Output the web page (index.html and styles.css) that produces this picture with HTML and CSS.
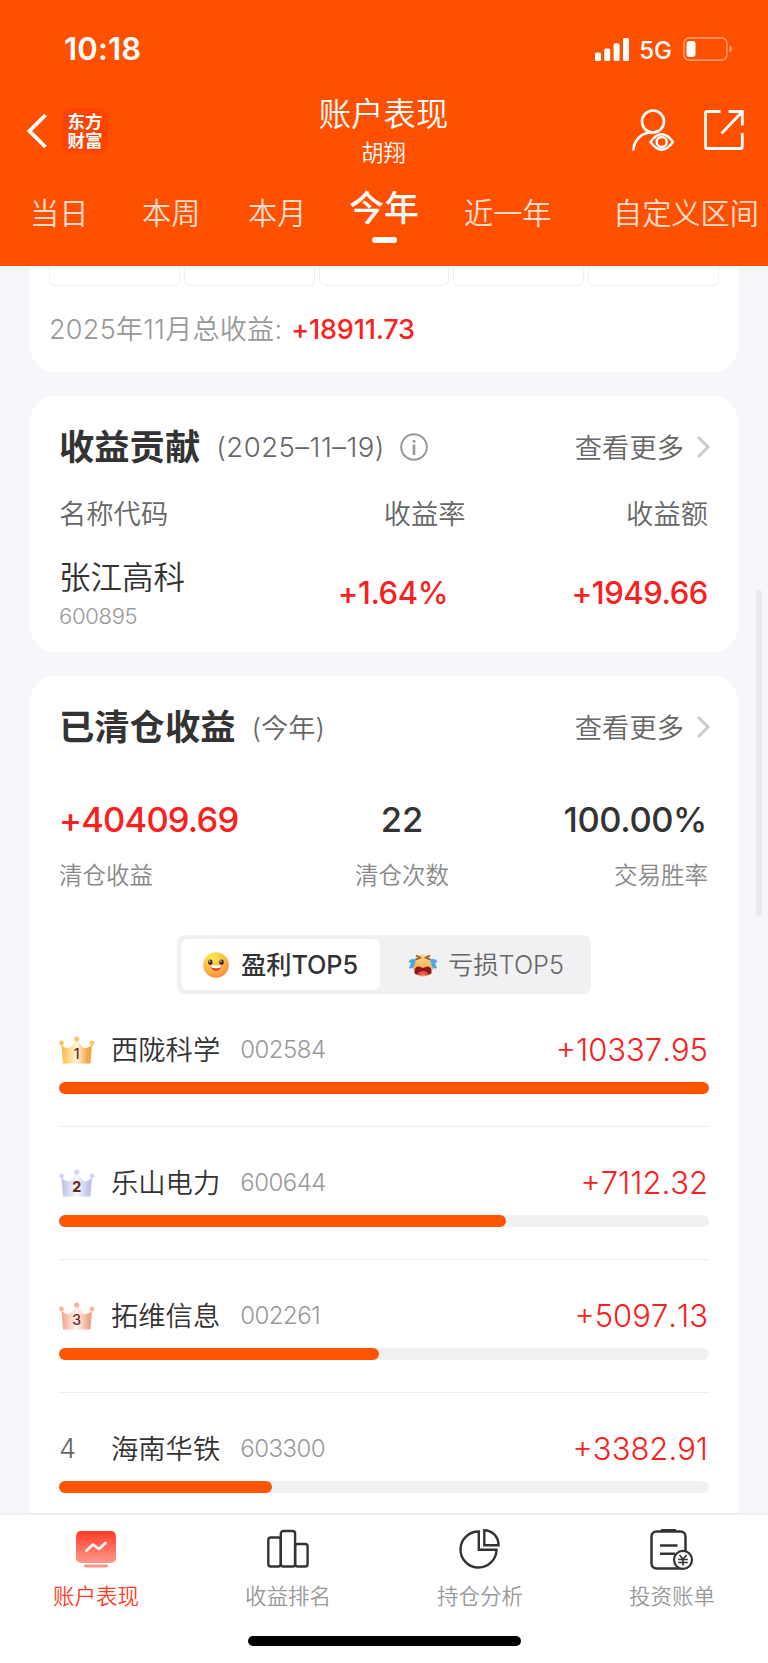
FILE: index.html
```
<!DOCTYPE html>
<html lang="zh-CN">
<head>
<meta charset="UTF-8">
<title>账户表现</title>
<link rel="stylesheet" href="styles.css">
</head>
<body>
<div id="app">

<header>
<div class="status">
<span class="clock">10:18</span>
<svg class="signal" width="34" height="23" viewBox="0 0 34 23" fill="#fff"><rect x="0" y="14.5" width="6" height="8.5" rx="1.6"/><rect x="9.2" y="10.5" width="6" height="12.5" rx="1.6"/><rect x="18.6" y="5.3" width="6" height="17.7" rx="1.6"/><rect x="28" y="0" width="6" height="23" rx="1.6"/></svg>
<span class="net">5G</span>
<svg class="battery" width="50" height="24" viewBox="0 0 50 24"><rect x=".9" y=".9" width="43" height="22.2" rx="5.5" fill="none" stroke="#fff" stroke-opacity=".42" stroke-width="1.6"/><rect x="3.5" y="4" width="9" height="16" rx="3" fill="#fff"/><path d="M46.5 8.2q2.6 1.4 2.6 3.8t-2.6 3.8z" fill="#fff" fill-opacity=".45"/></svg>
</div>

<div class="nav">
<div class="left">
<svg width="20" height="36" viewBox="0 0 20 36" fill="none" stroke="#fff" stroke-width="3.8"><path d="M18.5 2 2.5 18 18.5 34"/></svg>
<div class="logo">东方<br>财富</div>
</div>
<div class="title"><h1>账户表现</h1><p>胡翔</p></div>
<div class="right">
<svg width="42" height="42" viewBox="0 0 42 42" fill="none" stroke="#fff" stroke-width="2.6"><circle cx="21" cy="12.5" r="11"/><path d="M1.3 41.5C2 30.5 9.5 23.8 20 23.3"/><path d="M18.5 33Q29.7 17.5 41 33 29.7 48.5 18.5 33z" stroke-width="2.4"/><circle cx="29.7" cy="33" r="5" stroke-width="2.4"/></svg>
<svg width="40" height="40" viewBox="0 0 40 40" fill="none" stroke="#fff" stroke-width="2.8"><path d="M16.5 1.5H3.3Q1.5 1.5 1.5 3.3V36.7Q1.5 38.5 3.3 38.5H36.5Q38.3 38.5 38.3 36.7V23M24.5 1.5H38.3V15.5M38 2 17.5 23.5"/></svg>
</div>
</div>

<div class="tabs">
<span>当日</span><span>本周</span><span>本月</span><span class="on">今年</span><span>近一年</span><span>自定义区间</span>
</div>
</header>

<main>
<section class="card calendar">
<div class="days"><i></i><i></i><i></i><i></i><i></i></div>
<p>2025年11月总收益: <b>+18911.73</b></p>
</section>

<section class="card contrib">
<div class="head">
<h2>收益贡献</h2><span class="sub date">(2025–11–19)</span>
<svg class="info" width="28" height="28" viewBox="0 0 28 28" fill="none" stroke="#999" stroke-width="2"><circle cx="14" cy="14" r="12.8"/><path d="M14 11.5V22" stroke-width="2.6"/><circle cx="14" cy="8.3" r="1.5" fill="#999" stroke="none"/></svg>
<span class="more">查看更多</span>
<svg class="arrow" width="13" height="22" viewBox="0 0 13 22" fill="none" stroke="#ccc" stroke-width="3"><path d="M1 1 11 11 1 21"/></svg>
</div>
<div class="cols"><span>名称代码</span><span>收益率</span><span>收益额</span></div>
<div class="stock">
<div><div class="name">张江高科</div><div class="code">600895</div></div>
<b class="rate">+1.64%</b><b class="amount">+1949.66</b>
</div>
</section>

<section class="card cleared">
<div class="head">
<h2>已清仓收益</h2><span class="sub">(今年)</span>
<span class="more">查看更多</span>
<svg class="arrow" width="13" height="22" viewBox="0 0 13 22" fill="none" stroke="#ccc" stroke-width="3"><path d="M1 1 11 11 1 21"/></svg>
</div>
<div class="stats">
<div><b class="red">+40409.69</b><p>清仓收益</p></div>
<div><b>22</b><p>清仓次数</p></div>
<div><b>100.00%</b><p>交易胜率</p></div>
</div>

<div class="toggle">
<div class="on">
<svg width="26" height="26" viewBox="0 0 26 26"><defs><radialGradient id="smile" cx=".35" cy=".2" r=".9"><stop offset="0" stop-color="#ffe94e"/><stop offset=".55" stop-color="#fdb944"/><stop offset="1" stop-color="#f4803f"/></radialGradient></defs><circle cx="13" cy="13" r="12.8" fill="url(#smile)"/><ellipse cx="7.3" cy="10.2" rx="2.2" ry="2.7" fill="#4b2631"/><ellipse cx="18.5" cy="10.2" rx="2.2" ry="2.7" fill="#4b2631"/><circle cx="6.7" cy="9.3" r=".8" fill="#fff"/><circle cx="17.9" cy="9.3" r=".8" fill="#fff"/><path d="M7.7 12.5Q13 14 18.3 12.5 18.5 18.8 13 18.8T7.7 12.5z" fill="#d94a35"/><path d="M8 12.7Q13 14 18 12.7L17.5 15.5Q13 16.8 8.5 15.5z" fill="#fff"/></svg>
<span>盈利TOP5</span>
</div>
<div class="off">
<svg width="30" height="24" viewBox="0 0 30 24"><defs><linearGradient id="cry" x1="0" y1="0" x2="0" y2="1"><stop offset="0" stop-color="#ffd98a"/><stop offset="1" stop-color="#f29a35"/></linearGradient></defs><ellipse cx="15" cy="12.5" rx="10.5" ry="11" fill="url(#cry)"/><path d="M8 2.5 12.3 4.7 7.5 6.8M22 2.5 17.7 4.7 22.5 6.8" fill="none" stroke="#8b5636" stroke-width="1.5"/><path d="M6.5 20.5Q6 13 11 13.5L15 15 19 13.5Q24 13 23.5 20.5 19 23 15 20.500 11 23 6.500 20.500z" fill="#8d171c"/><path d="M10 20Q15 16 20 20V21.5H10z" fill="#ef4f55"/><path d="M8 6.500Q2 5 .5 9L3 10 1 15Q5 17 6.500 12z" fill="#45aaf2"/><path d="M22 6.500Q28 5 29.500 9L27 10 29 15Q25 17 23.500 12z" fill="#45aaf2"/></svg>
<span>亏损TOP5</span>
</div>
</div>

<svg width="0" height="0" class="defs"><defs>
<linearGradient id="gold"><stop offset="0" stop-color="#f9b93c"/><stop offset=".5" stop-color="#fff6dc"/><stop offset=".85" stop-color="#f6a544"/></linearGradient>
<linearGradient id="silver"><stop offset="0" stop-color="#b9bfe8"/><stop offset=".5" stop-color="#f8f9ff"/><stop offset=".9" stop-color="#bec2e8"/></linearGradient>
<linearGradient id="bronze"><stop offset="0" stop-color="#f0a385"/><stop offset=".5" stop-color="#fff5ef"/><stop offset=".9" stop-color="#eda587"/></linearGradient>
<g id="crown"><path d="M2.5 8.5Q8 14 11.5 11.5 14.5 8.5 17.7 3.5 21 8.5 24 11.5 27.5 14 33 8.5L31.5 27.5H4z"/></g>
<g id="beads"><circle cx="17.7" cy="3" r="2.6"/><circle cx="2.5" cy="7" r="2.4"/><circle cx="33" cy="7" r="2.4"/></g>
</defs></svg>

<ul class="rank">
<li>
<div class="line"><svg width="36" height="28" viewBox="0 0 36 28"><use href="#crown" fill="url(#gold)"/><use href="#beads" fill="#f9c565"/><text x="17.7" y="22.8">1</text></svg><span class="name">西陇科学</span><span class="code">002584</span><span class="val">+10337.95</span></div>
<div class="bar"><div style="width:100%"></div></div>
</li>
<li>
<div class="line"><svg width="36" height="28" viewBox="0 0 36 28"><use href="#crown" fill="url(#silver)"/><use href="#beads" fill="#d2d5f3"/><text class="bold" x="17.7" y="22.8">2</text></svg><span class="name">乐山电力</span><span class="code">600644</span><span class="val">+7112.32</span></div>
<div class="bar"><div style="width:68.8%"></div></div>
</li>
<li>
<div class="line"><svg width="36" height="28" viewBox="0 0 36 28"><use href="#crown" fill="url(#bronze)"/><use href="#beads" fill="#f2b49b"/><text x="17.7" y="22.8">3</text></svg><span class="name">拓维信息</span><span class="code">002261</span><span class="val">+5097.13</span></div>
<div class="bar"><div style="width:49.3%"></div></div>
</li>
<li>
<div class="line"><span class="no">4</span><span class="name">海南华铁</span><span class="code">603300</span><span class="val">+3382.91</span></div>
<div class="bar"><div style="width:32.7%"></div></div>
</li>
</ul>
</section>
<div class="scrollbar"></div>
</main>

<footer>
<div class="menu">
<div class="item on">
<svg width="42" height="42" viewBox="0 0 42 42"><defs><linearGradient id="red" x1="0" y1="0" x2="0" y2="1"><stop offset="0" stop-color="#ff3b26"/><stop offset="1" stop-color="#ff9a8c"/></linearGradient></defs><rect x="1" y="2" width="40" height="32" rx="5" fill="url(#red)"/><rect x="9" y="35.5" width="24" height="3" rx="1.5" fill="#ff9487"/><path d="M11.5 21.5 18 15.5 24 20 30.5 14" fill="none" stroke="#fff" stroke-width="2.6" stroke-linecap="round" stroke-linejoin="round"/></svg>
<span>账户表现</span>
</div>
<div class="item">
<svg width="42" height="42" viewBox="0 0 42 42" fill="none" stroke="#333" stroke-width="2.4"><rect x="1.3" y="8.5" width="12.500" height="29" rx="2.5"/><rect x="13.8" y="2" width="14.3" height="35.5" rx="2.5"/><rect x="28.1" y="15" width="12.500" height="22.5" rx="2.5"/></svg>
<span>收益排名</span>
</div>
<div class="item">
<svg width="42" height="42" viewBox="0 0 42 42" fill="none" stroke="#333" stroke-width="2.4"><path d="M19.8 2.5A18 18 0 1 0 37.5 20.7H19.8z"/><path d="M25.3 1.2V16.2H39.5C39.5 7.5 33 1.2 25.3 1.2z"/></svg>
<span>持仓分析</span>
</div>
<div class="item">
<svg width="44" height="42" viewBox="0 0 44 42" fill="none" stroke="#333" stroke-width="2.5"><rect x="1.5" y="2.5" width="34" height="37" rx="5"/><path d="M12 1.3H25" stroke-width="2.6" stroke-linecap="round"/><path d="M10 16.5H27.5M10 24.8H25" stroke-width="2.6"/><circle cx="33" cy="30.8" r="9" fill="#fff" stroke-width="2.2"/><path d="M29.5 26 33 30.2 36.5 26M28.2 30.5H37.8M28.2 33.5H37.8M33 30V36.5" stroke-width="1.7"/></svg>
<span>投资账单</span>
</div>
</div>
<div class="home"></div>
</footer>

</div>
</body>
</html>
```

FILE: styles.css
```
*{box-sizing:border-box;margin:0;padding:0;}
body{font-family:Inter,"Noto Sans CJK SC",sans-serif;background:#f6f7fa;color:#333;font-weight:350;}
svg{display:block;flex:none;}
b{font-weight:500;}
ul{list-style:none;}
#app{width:768px;height:1663px;display:flex;flex-direction:column;overflow:hidden;}

header{height:266px;background:#ff5000;color:#fff;flex:none;}
.status{height:98px;padding:0 35px 0 64px;display:flex;align-items:center;}
.clock{font-size:31px;font-weight:600;margin-right:auto;letter-spacing:.2px;margin-top:-1px;}
.net{font-size:24px;font-weight:450;margin:2px 11px 0 10px;}
.nav{height:72px;padding:0 27px 0 26px;display:grid;grid-template-columns:1fr auto 1fr;}
.left,.right{display:flex;align-items:center;height:66px;}
.left svg{margin-left:1px;}
.right{justify-content:flex-end;gap:30px;margin-right:-3px;height:64px;}
.logo{width:46px;height:46px;margin-left:15px;border-radius:10px;background:#ff4400;font-size:17.5px;line-height:19px;font-weight:700;text-align:center;padding-top:4px;}
.title{text-align:center;}
h1{font-size:32.4px;line-height:34px;font-weight:350;}
.title p{font-size:22.3px;line-height:42px;}
.tabs{display:grid;grid-template-columns:112px 106px 101px 115px 149px 150px;padding-left:30px;font-size:29.2px;line-height:87px;height:96px;white-space:nowrap;}
.tabs span{opacity:.8;}
.tabs .on{opacity:1;position:relative;font-size:35px;font-weight:500;line-height:76px;}
.tabs .on:after{content:"";position:absolute;left:23px;top:67px;width:25px;height:6px;border-radius:3px;background:#fff;}

main{flex:1;min-height:0;overflow:hidden;padding:0 30px;position:relative;}
.card{background:#fff;border-radius:25px;margin-bottom:24px;padding:0 29px;}
.calendar{height:106px;border-radius:0 0 25px 25px;padding:0 19px;}
.days{display:grid;grid-template-columns:repeat(5,1fr);gap:4px;}
.days i{height:20px;border:1px solid #f0f0f3;border-top:0;border-radius:0 0 6px 6px;}
.calendar p{font-size:27px;letter-spacing:.3px;line-height:40px;margin-top:24px;color:#999;}
.calendar b{color:#fa2020;letter-spacing:-.2px;margin-left:1px;}
.contrib{height:256px;padding-top:31px;}
.cleared{height:900px;padding-top:31px;}
.head{display:flex;align-items:center;height:40px;}
h2{font-size:35.3px;font-weight:700;margin-top:-5px;}
.sub{font-size:27.3px;color:#666;margin-left:16px;margin-top:-3px;}
.date{font-size:27.5px;letter-spacing:.5px;margin-top:0;}
.info{margin-left:15px;}
.more{font-size:27.3px;color:#666;margin-left:auto;margin-top:-3px;}
.arrow{margin-left:13px;margin-right:-1px;}
.cols{display:grid;grid-template-columns:1fr 1fr 1fr;font-size:27.3px;line-height:40px;color:#666;margin-top:28px;}
.cols span:nth-child(2){padding-left:108px;}
.cols span:last-child{padding-right:1px;}
.cols span:last-child,.amount{text-align:right;}
.stock{display:grid;grid-template-columns:1fr 1fr 1fr;margin-top:19px;font-size:31px;letter-spacing:-.4px;}
.stock b{color:#fa2020;line-height:77px;}
.stock .rate{padding-left:62px;}
.stock .amount{padding-right:1px;}
.stock .name{font-size:31.5px;line-height:48px;letter-spacing:0;}
.stock .code{font-size:22px;line-height:28px;color:#999;letter-spacing:-.3px;}
.stats{display:flex;justify-content:space-between;margin-top:48px;}
.stats div:nth-child(2){text-align:center;padding-left:2px;}
.stats div:last-child{text-align:right;padding-right:1px;}
.stats b{display:block;font-size:34.5px;line-height:49px;}
.stats div:last-child b{padding-right:1px;letter-spacing:-.4px;}
.stats .red{color:#fa2020;letter-spacing:-.8px;}
.stats p{font-size:23.5px;line-height:34px;margin-top:15px;color:#888;}
.toggle{width:414px;height:59px;margin:42px auto 0;padding:4px;background:#f1f1f4;border-radius:8px;display:flex;font-size:25.3px;}
.toggle div{display:flex;align-items:center;}
.toggle span{margin-top:-3px;}
.toggle .on{width:199px;background:#fff;border-radius:7px;padding-left:22px;gap:12px;font-weight:500;letter-spacing:-.1px;}
.toggle .off{padding-left:28px;gap:10px;color:#666;}
.defs{position:absolute;}
.rank li{height:133px;padding-top:35px;border-bottom:1px solid #eee;}
.line{display:flex;align-items:center;height:40px;}
.line svg{margin-top:2px;}
.rank text{font-size:14px;font-weight:500;text-anchor:middle;fill:#6b2a1d;}
.rank .bold{font-weight:800;}
.rank .no{width:36px;font-size:27px;color:#666;}
.rank .name{font-size:27.3px;margin-left:16px;margin-top:-3px;}
.rank .code{font-size:24px;color:#999;margin-left:20px;letter-spacing:-.5px;padding-top:1px;}
.rank .val{font-size:31px;color:#fa2020;margin-left:auto;padding-right:1px;font-kerning:none;}
.bar{height:12px;margin-top:13px;border-radius:6px;background:#f1f1f4;}
.bar div{height:12px;border-radius:6px;background:#ff5500;}
.scrollbar{position:absolute;right:6px;top:324px;width:6px;height:327px;border-radius:3px;background:#e9eaed;}

footer{flex:none;height:150px;background:#fff;border-top:2px solid #eee;}
.menu{display:grid;grid-template-columns:repeat(4,1fr);padding-top:14px;}
.item{display:flex;flex-direction:column;align-items:center;color:#999;font-size:21.5px;line-height:32px;}
.item span{margin-top:9px;}
.item.on{color:#ff3b26;}
.home{width:273px;height:10px;border-radius:5px;background:#000;margin:24px auto 0;}
```
